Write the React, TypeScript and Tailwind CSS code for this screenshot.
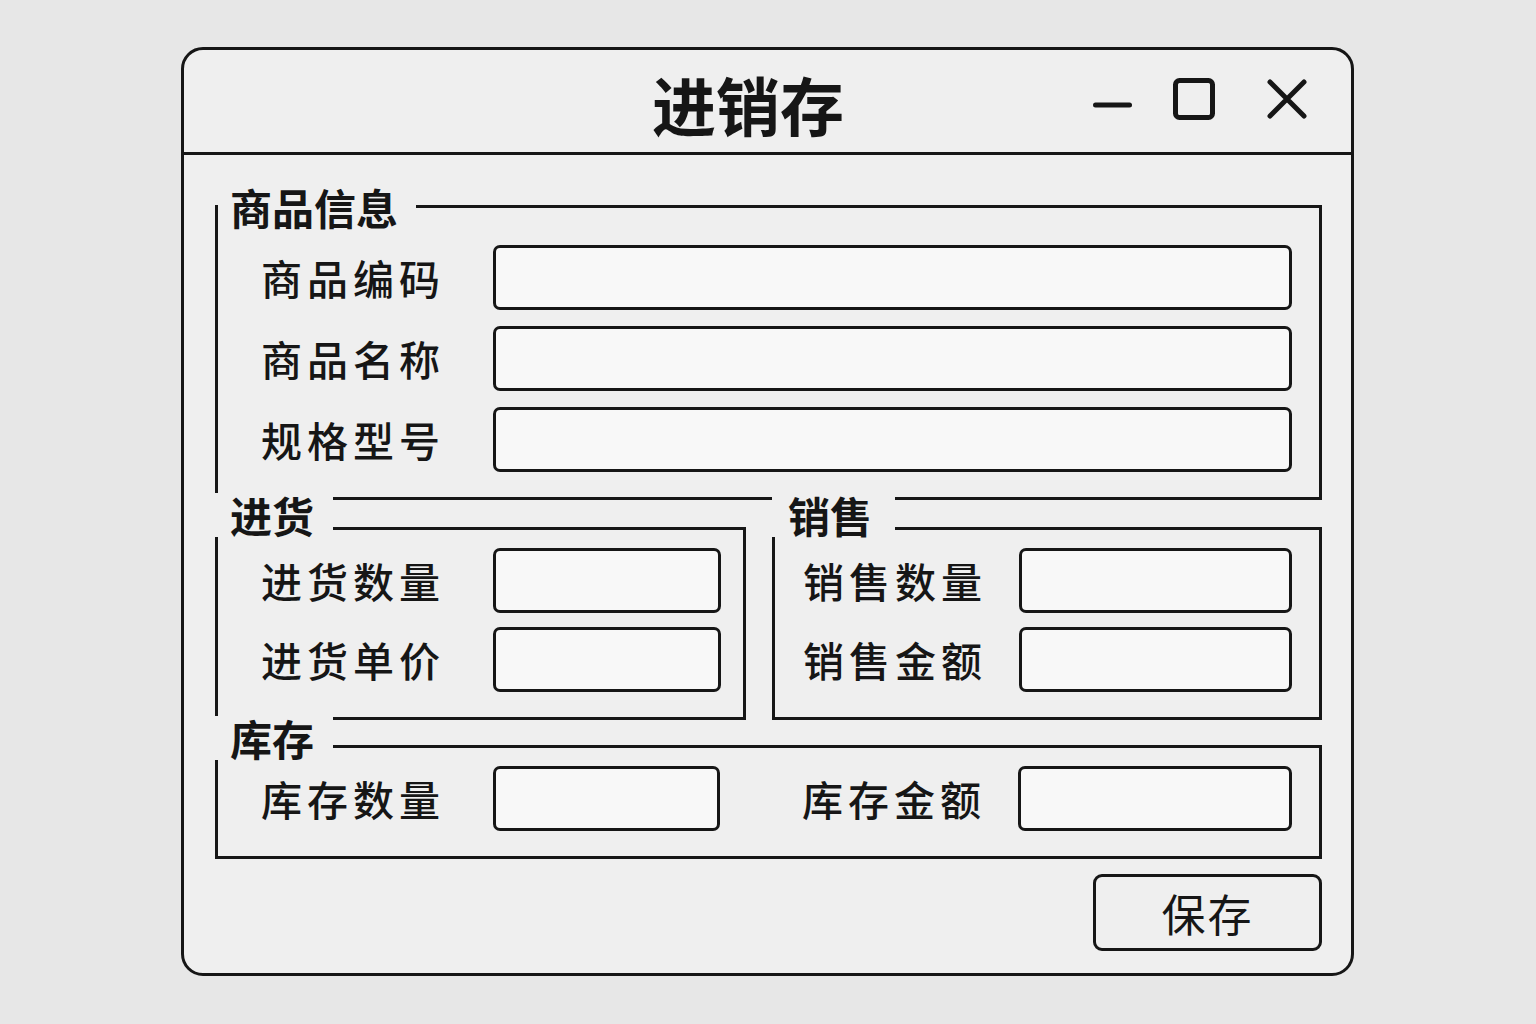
import React from 'react';

const FONT = '"Noto Sans CJK SC", "Noto Sans", sans-serif';

const Field: React.FC<{ label: string; labelW: string; inputW?: string }> = ({ label, labelW, inputW }) => (
  <div className="flex items-center">
    <span className={`${labelW} text-[41px] font-medium leading-none tracking-[5px] text-[#161616]`}>{label}</span>
    <div className={`${inputW ?? 'flex-1'} h-[65px] rounded-[7px] border-[3px] border-[#161616] bg-[#f8f8f8]`} />
  </div>
);

// group box with a legend that sits over the border lines
const Group: React.FC<{
  title: string;
  legendPos: string;
  className: string;
  children: React.ReactNode;
}> = ({ title, legendPos, className, children }) => (
  <div className={`relative border-[3px] border-[#161616] ${className}`}>
    <span
      className={`absolute ${legendPos} h-[44px] leading-[44px] bg-[#efefef] text-[42px] font-bold text-[#161616] whitespace-nowrap`}
    >
      {title}
    </span>
    {children}
  </div>
);

export default function App() {
  return (
    <div className="min-h-screen w-full bg-[#e7e7e7] pt-[47px] pl-[181px]" style={{ fontFamily: FONT }}>
      <div className="w-[1173px] h-[929px] rounded-[22px] border-[3px] border-[#161616] bg-[#efefef] flex flex-col overflow-hidden">
        {/* Title bar */}
        <div className="h-[105px] shrink-0 border-b-[3px] border-[#161616] flex items-center">
          <span className="ml-[468px] mt-[4px] text-[64px] font-bold leading-none text-[#161616]">进销存</span>
          <div className="ml-auto mr-[44px] flex items-center">
            <svg width="39" height="10" viewBox="0 0 39 10" className="mt-[8px]">
              <line x1="2.5" y1="5" x2="36.5" y2="5" stroke="#161616" strokeWidth="5" strokeLinecap="round" />
            </svg>
            <svg width="42" height="42" viewBox="0 0 42 42" className="ml-[41px] -mt-[4px]">
              <rect x="2.5" y="2.5" width="37" height="37" rx="4" fill="none" stroke="#161616" strokeWidth="5" />
            </svg>
            <svg width="40" height="40" viewBox="0 0 40 40" className="ml-[52px] -mt-[4px]">
              <path d="M3 3 L37 37 M37 3 L3 37" stroke="#161616" strokeWidth="5" strokeLinecap="round" />
            </svg>
          </div>
        </div>

        {/* Body */}
        <div className="flex-1 flex flex-col pt-[50px] pl-[31px] pr-[29px]">
          <Group title="商品信息" legendPos="left-0 -top-[23px] pl-[12px] pr-[18px]" className="h-[295px] pt-[37px] pl-[43px] pr-[27px]">
            <div className="flex flex-col gap-[16px]">
              <Field label="商品编码" labelW="w-[232px]" />
              <Field label="商品名称" labelW="w-[232px]" />
              <Field label="规格型号" labelW="w-[232px]" />
            </div>
          </Group>

          <div className="mt-[27px] flex gap-[26px]">
            <Group title="进货" legendPos="-left-[3px] -top-[37px] pl-[15px] pr-[19px]" className="w-[531px] h-[193px] pt-[18px] pl-[43px] pr-[22px]">
              <div className="flex flex-col gap-[14px]">
                <Field label="进货数量" labelW="w-[232px]" />
                <Field label="进货单价" labelW="w-[232px]" />
              </div>
            </Group>
            <Group title="销售" legendPos="-left-[3px] -top-[37px] pl-[16px] pr-[23px]" className="flex-1 h-[193px] pt-[18px] pl-[28px] pr-[27px]">
              <div className="flex flex-col gap-[14px]">
                <Field label="销售数量" labelW="w-[216px]" />
                <Field label="销售金额" labelW="w-[216px]" />
              </div>
            </Group>
          </div>

          <Group title="库存" legendPos="-left-[3px] -top-[32px] pl-[15px] pr-[19px]" className="mt-[25px] h-[114px] pt-[18px] pl-[43px] pr-[27px]">
            <div className="flex items-center">
              <Field label="库存数量" labelW="w-[232px]" inputW="w-[227px]" />
              <div className="ml-[82px] flex-1">
                <Field label="库存金额" labelW="w-[216px]" />
              </div>
            </div>
          </Group>

          <div className="mt-[15px] flex justify-end">
            <button className="w-[229px] h-[77px] rounded-[9px] border-[3px] border-[#161616] bg-[#efefef] text-[44px] leading-none tracking-[2px] text-[#161616]">
              保存
            </button>
          </div>
        </div>
      </div>
    </div>
  );
}
